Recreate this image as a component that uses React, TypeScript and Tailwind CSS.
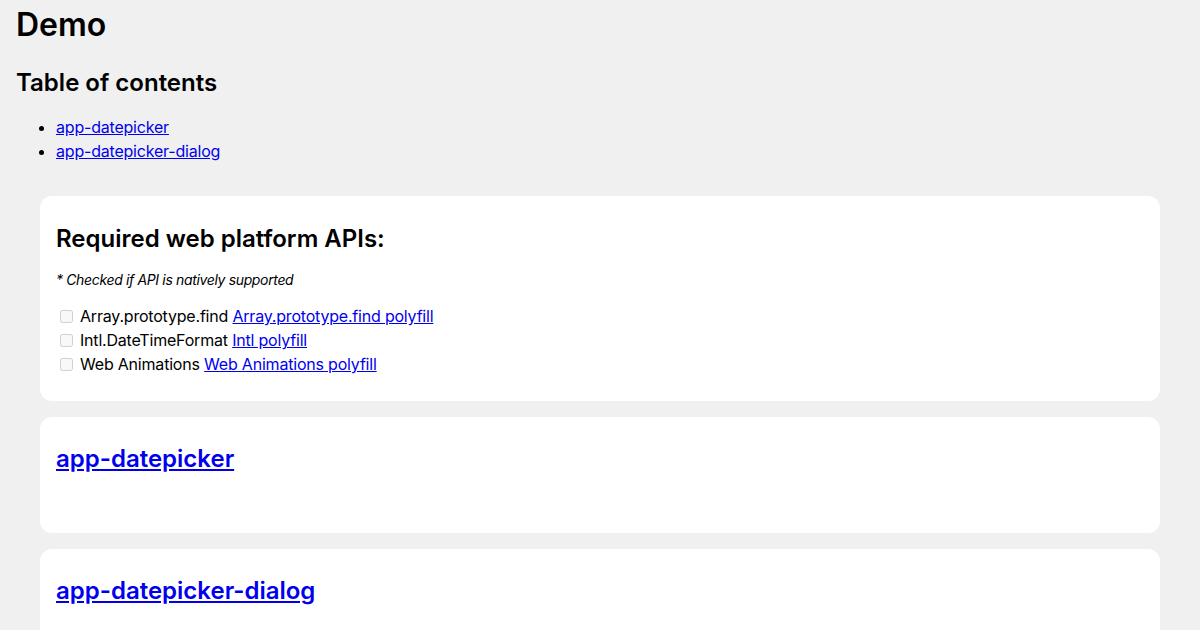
import React from "react";

const apis = [
  { name: "Array.prototype.find", link: "Array.prototype.find polyfill" },
  { name: "Intl.DateTimeFormat", link: "Intl polyfill" },
  { name: "Web Animations", link: "Web Animations polyfill" },
];

const Card = ({ children, className = "" }: { children: React.ReactNode; className?: string }) => (
  <section className={`bg-white rounded-xl px-4 ${className}`}>{children}</section>
);

const App = () => {
  return (
    <div
      className="min-h-screen bg-[#f0f0f0] text-black text-base"
      style={{ fontFamily: "Inter, 'Open Sans', sans-serif" }}
    >
      <div className="px-4 pt-[5px]">
        <h1 className="text-[32px] leading-10 font-semibold">Demo</h1>
        <h2 className="mt-[22px] text-2xl leading-8 font-semibold">Table of contents</h2>
        <ul className="mt-[16px] list-disc pl-10 leading-6 tracking-[-0.2px]">
          <li>
            <a href="#app-datepicker" className="text-[#0000ee] underline">app-datepicker</a>
          </li>
          <li>
            <a href="#app-datepicker-dialog" className="text-[#0000ee] underline">app-datepicker-dialog</a>
          </li>
        </ul>
      </div>

      {/* demo cards */}
      <div className="mx-10 mt-[33px] flex flex-col gap-4">
        <Card className="pt-[27px] pb-[25px]">
          <h2 className="text-2xl leading-8 font-semibold">Required web platform APIs:</h2>
          <p className="mt-[15px] text-sm leading-5 italic tracking-[-0.35px]">* Checked if API is natively supported</p>
          <ul className="mt-[14px] leading-6 tracking-[-0.2px]">
            {apis.map((a) => (
              <li key={a.name} className="flex items-center">
                <input type="checkbox" disabled className="ml-1 mr-[3px] w-[13px] h-[13px]" />
                <span className="ml-1">
                  {a.name}{" "}
                  <a href="#" className="text-[#0000ee] underline">{a.link}</a>
                </span>
              </li>
            ))}
          </ul>
        </Card>

        <Card className="pt-[26px] h-[116px]">
          <h2 id="app-datepicker" className="text-2xl leading-8 font-semibold">
            <a href="#app-datepicker" className="text-[#0000ee] underline">app-datepicker</a>
          </h2>
        </Card>

        <Card className="pt-[26px] h-[116px]">
          <h2 id="app-datepicker-dialog" className="text-2xl leading-8 font-semibold">
            <a href="#app-datepicker-dialog" className="text-[#0000ee] underline">app-datepicker-dialog</a>
          </h2>
        </Card>
      </div>
    </div>
  );
};

export default App;
